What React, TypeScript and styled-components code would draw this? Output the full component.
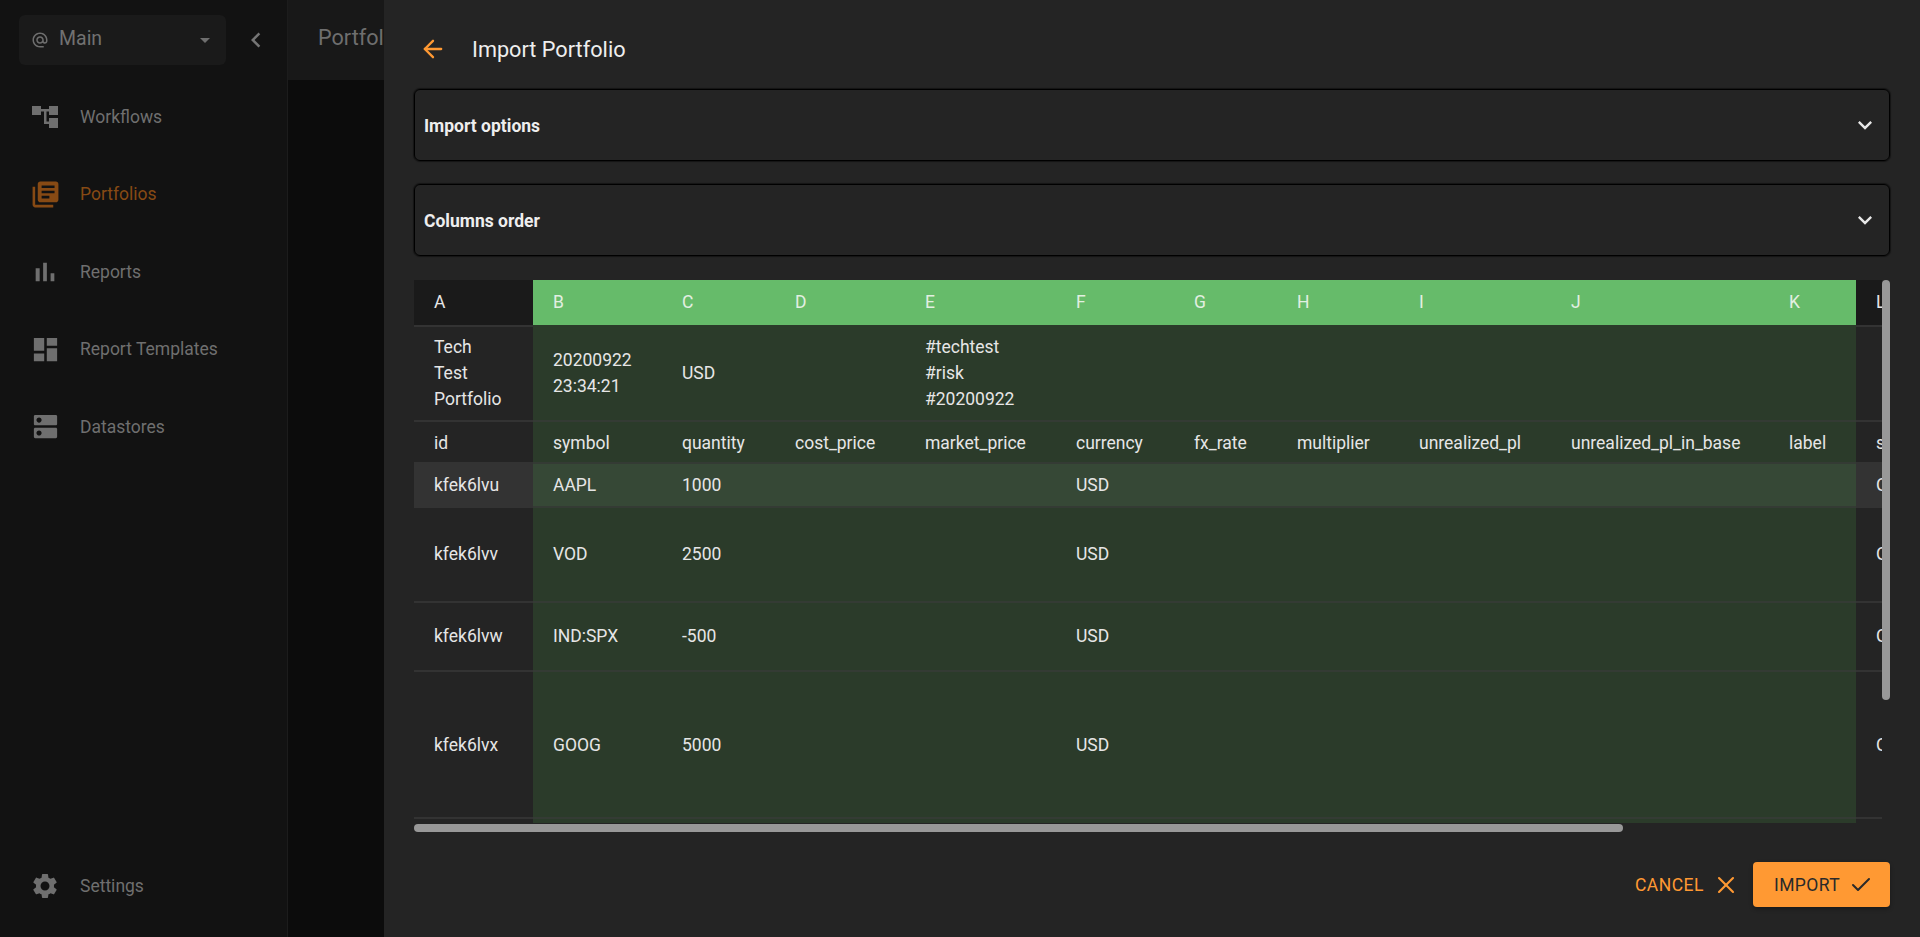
import React from 'react'
import styled, { createGlobalStyle } from 'styled-components'
import { MdDashboard, MdLibraryBooks, MdSettings, MdDns, MdExpandMore, MdChevronLeft, MdArrowDropDown, MdAlternateEmail } from 'react-icons/md'
import { ArrowLeft, Check, X } from 'lucide-react'

const GlobalStyle = createGlobalStyle`
    html, body {
        margin: 0;
        height: 100%;
        overflow: hidden;
        background: #0d0d0d;
        font-family: Roboto, "Liberation Sans", sans-serif;
    }
`

const WorkflowIcon = () => (
    <svg width="26" height="24" viewBox="0 0 26 24" fill="currentColor">
        <rect x="0" y="1" width="9" height="9" />
        <rect x="17" y="1" width="9" height="9" />
        <rect x="17" y="13" width="9" height="10" />
        <rect x="9" y="4" width="8" height="2.5" />
        <rect x="12" y="4" width="2.5" height="15" />
        <rect x="12" y="16.5" width="5" height="2.5" />
    </svg>
)

const BarsIcon = () => (
    <svg width="32" height="32" viewBox="0 0 24 24" fill="currentColor">
        <path d="M5 9.2h3V19H5zM10.6 5h2.8v14h-2.8zm5.6 8H19v6h-2.8z" />
    </svg>
)

const navItems = [
    { label: 'Workflows', icon: <WorkflowIcon /> },
    { label: 'Portfolios', icon: <MdLibraryBooks size={31} />, active: true },
    { label: 'Reports', icon: <BarsIcon /> },
    { label: 'Report Templates', icon: <MdDashboard size={31} /> },
    { label: 'Datastores', icon: <MdDns size={31} /> }
]

const columns = [
    { key: 'A', width: 119 },
    { key: 'B', width: 129, active: true },
    { key: 'C', width: 113, active: true },
    { key: 'D', width: 130, active: true },
    { key: 'E', width: 151, active: true },
    { key: 'F', width: 118, active: true },
    { key: 'G', width: 103, active: true },
    { key: 'H', width: 122, active: true },
    { key: 'I', width: 152, active: true },
    { key: 'J', width: 218, active: true },
    { key: 'K', width: 87, active: true },
    { key: 'L', width: 100 }
]

// height is the full row with its border, shift nudges the text up (+) or down (-)
const rows: { cells: React.ReactNode[]; height: number; shift?: number; hover?: boolean }[] = [
    {
        height: 95,
        shift: 2,
        cells: [
            <>Tech<br />Test<br />Portfolio</>,
            <>20200922<br />23:34:21</>,
            'USD',
            '',
            <>#techtest<br />#risk<br />#20200922</>,
            '', '', '', '', '', '', ''
        ]
    },
    {
        height: 42,
        shift: -2,
        cells: ['id', 'symbol', 'quantity', 'cost_price', 'market_price', 'currency', 'fx_rate', 'multiplier', 'unrealized_pl', 'unrealized_pl_in_base', 'label', 'strategy']
    },
    { height: 44, hover: true, cells: ['kfek6lvu', 'AAPL', '1000', '', '', 'USD', '', '', '', '', '', 'Open'] },
    { height: 95, shift: 2, cells: ['kfek6lvv', 'VOD', '2500', '', '', 'USD', '', '', '', '', '', 'Open'] },
    { height: 69, shift: 2, cells: ['kfek6lvw', 'IND:SPX', '-500', '', '', 'USD', '', '', '', '', '', 'Open'] },
    { height: 147, cells: ['kfek6lvx', 'GOOG', '5000', '', '', 'USD', '', '', '', '', '', 'Open'] }
]

export default function App() {
    return (
        <Page>
            <GlobalStyle />
            <Sidebar>
                <SidebarTop>
                    <WorkspaceSelect>
                        <MdAlternateEmail size={18} />
                        <WorkspaceName>Main</WorkspaceName>
                        <Caret><MdArrowDropDown size={24} /></Caret>
                    </WorkspaceSelect>
                    <Collapse><MdChevronLeft size={30} /></Collapse>
                </SidebarTop>
                <Nav>
                    {navItems.map(item => (
                        <NavItem key={item.label} $active={item.active}>
                            <NavIcon>{item.icon}</NavIcon>
                            {item.label}
                        </NavItem>
                    ))}
                </Nav>
                <NavItem>
                    <NavIcon><MdSettings size={30} /></NavIcon>
                    Settings
                </NavItem>
            </Sidebar>
            <Main>
                <TopBar>Portfolios</TopBar>
            </Main>
            <Drawer>
                <DrawerHeader>
                    <BackButton><ArrowLeft size={28} strokeWidth={2} /></BackButton>
                    <DrawerTitle>Import Portfolio</DrawerTitle>
                </DrawerHeader>
                <Accordion>
                    <AccordionTitle>Import options</AccordionTitle>
                    <MdExpandMore size={28} />
                </Accordion>
                <Accordion>
                    <AccordionTitle>Columns order</AccordionTitle>
                    <MdExpandMore size={28} />
                </Accordion>
                <TableWrap>
                    <SheetViewport>
                        <Sheet>
                            <colgroup>
                                {columns.map(c => <col key={c.key} style={{ width: c.width }} />)}
                            </colgroup>
                            <thead>
                                <tr>
                                    {columns.map(c => (
                                        <HeadCell key={c.key} $active={c.active}>{c.key}</HeadCell>
                                    ))}
                                </tr>
                            </thead>
                            <tbody>
                                {rows.map((row, r) => (
                                    <tr key={r} style={{ height: row.height }}>
                                        {row.cells.map((cell, i) => (
                                            <Cell key={i} $active={columns[i].active} $hover={row.hover} $shift={row.shift ?? 0}>{cell}</Cell>
                                        ))}
                                    </tr>
                                ))}
                                <tr>
                                    {columns.map(c => <EmptyCell key={c.key} $active={c.active} />)}
                                </tr>
                            </tbody>
                        </Sheet>
                    </SheetViewport>
                    <ScrollV />
                    <ScrollH />
                </TableWrap>
                <Footer>
                    <CancelButton>CANCEL <X size={28} strokeWidth={1.8} /></CancelButton>
                    <ImportButton>IMPORT <Check size={24} strokeWidth={2} /></ImportButton>
                </Footer>
            </Drawer>
        </Page>
    )
}

const Page = styled.div`
    position: relative;
    display: flex;
    width: 1920px;
    height: 937px;
    overflow: hidden;
`

const Sidebar = styled.aside`
    width: 287px;
    flex-shrink: 0;
    display: flex;
    flex-direction: column;
    background: #121212;
    border-right: 1px solid #1c1c1c;
    padding-bottom: 12px;
    box-sizing: content-box;
`

const SidebarTop = styled.div`
    display: flex;
    align-items: center;
    padding: 15px 0 0 19px;
    height: 50px;
`

const WorkspaceSelect = styled.div`
    width: 207px;
    height: 50px;
    box-sizing: border-box;
    display: flex;
    align-items: center;
    padding: 0 12px;
    border-radius: 6px;
    background: #1a1a1a;
    color: #6e6e6e;

    svg {
        flex-shrink: 0;
    }
`

const WorkspaceName = styled.span`
    margin-left: 10px;
    font-size: 19.5px;
    color: #717171;
    flex-grow: 1;
    margin-top: -3px;
`

const Caret = styled.span`
    display: flex;
    margin-right: -3px;
    color: #6e6e6e;
`

const Collapse = styled.span`
    display: flex;
    margin-left: 15px;
    color: #757575;
`

const Nav = styled.nav`
    flex-grow: 1;
    display: flex;
    flex-direction: column;
    padding-top: 13px;
`

const NavItem = styled.div<{ $active?: boolean }>`
    height: 77.5px;
    flex-shrink: 0;
    display: flex;
    align-items: center;
    padding-left: 32px;
    font-size: 17.5px;
    color: ${({ $active }) => ($active ? '#874a14' : '#6f6f6f')};
`

const NavIcon = styled.span`
    display: flex;
    align-items: center;
    justify-content: center;
    width: 26px;
    margin-right: 22px;

    svg {
        flex-shrink: 0;
    }
`

const Main = styled.main`
    flex-grow: 1;
    background: #0c0c0c;
`

const TopBar = styled.header`
    height: 80px;
    background: #181818;
    color: #6e6e6e;
    font-size: 21.6px;
    line-height: 76px;
    padding-left: 30px;
`

const Drawer = styled.section`
    position: absolute;
    top: 0;
    right: 0;
    bottom: 0;
    width: 1536px;
    box-sizing: border-box;
    display: flex;
    flex-direction: column;
    padding: 0 30px;
    background: #242424;
    color: #eeeeee;
`

const DrawerHeader = styled.div`
    display: flex;
    align-items: center;
    height: 89px;
    padding-top: 9px;
    box-sizing: border-box;
`

const BackButton = styled.span`
    display: flex;
    margin-left: 5px;
    color: #ff9933;
`

const DrawerTitle = styled.h1`
    margin: 0 0 0 25px;
    font-size: 21.7px;
    font-weight: 400;
`

const Accordion = styled.div`
    height: 72px;
    box-sizing: border-box;
    display: flex;
    align-items: center;
    justify-content: space-between;
    margin-bottom: 23px;
    padding: 0 10px 0 9px;
    border: 1px solid #000000;
    border-radius: 6px;
    box-shadow: 0 0 1px 1px rgba(0, 0, 0, 0.45);
    font-size: 17.5px;
    font-weight: 700;

    svg {
        color: #e8e8e8;
    }
`

const AccordionTitle = styled.span`
    padding-top: 2px;
`

const TableWrap = styled.div`
    position: relative;
    height: 552px;
    margin-top: 1px;
    overflow: hidden;
`

const SheetViewport = styled.div`
    width: 1468px;
    height: 543px;
    overflow: hidden;
`

const Sheet = styled.table`
    table-layout: fixed;
    width: 1522px;
    border-collapse: separate;
    border-spacing: 0;
    font-size: 17.5px;
    line-height: 26px;
    color: #e6e6e6;
`

const HeadCell = styled.th<{ $active?: boolean }>`
    height: 47px;
    box-sizing: border-box;
    padding: 0 0 2px 20px;
    text-align: left;
    font-weight: 400;
    color: ${({ $active }) => ($active ? '#e2efe2' : '#e6e6e6')};
    background: ${({ $active }) => ($active ? '#66bb6a' : '#1a1a1a')};
    border-bottom: 2px solid ${({ $active }) => ($active ? '#2b3b2a' : '#333333')};
`

const Cell = styled.td<{ $active?: boolean; $hover?: boolean; $shift: number }>`
    padding: ${({ $shift }) => ($shift < 0 ? -$shift : 0)}px 0 ${({ $shift }) => ($shift > 0 ? $shift : 0)}px 20px;
    box-sizing: border-box;
    white-space: nowrap;
    background: ${({ $active, $hover }) =>
        $active ? ($hover ? '#364836' : '#2b3b2a') : $hover ? '#333333' : '#242424'};
    border-bottom: 2px solid ${({ $active }) => ($active ? '#343b34' : '#333333')};
`

const EmptyCell = styled.td<{ $active?: boolean }>`
    height: 20px;
    padding: 0;
    background: ${({ $active }) => ($active ? '#2b3b2a' : '#242424')};
`

const ScrollV = styled.div`
    position: absolute;
    top: 0;
    right: 0;
    width: 8px;
    height: 420px;
    border-radius: 4px;
    background: #989898;
`

const ScrollH = styled.div`
    position: absolute;
    left: 0;
    top: 544px;
    width: 1209px;
    height: 8px;
    border-radius: 4px;
    background: #989898;
`

const Footer = styled.footer`
    display: flex;
    align-items: center;
    justify-content: flex-end;
    gap: 13px;
    margin-top: 30px;
`

const CancelButton = styled.span`
    display: flex;
    align-items: center;
    gap: 8px;
    font-size: 17.5px;
    letter-spacing: 0.5px;
    color: #ff9933;
`

const ImportButton = styled.span`
    width: 137px;
    height: 45px;
    box-sizing: border-box;
    display: flex;
    align-items: center;
    gap: 9px;
    padding-left: 21px;
    border-radius: 4px;
    font-size: 17.5px;
    letter-spacing: 0.4px;
    background: #ff9933;
    color: #2a2a2a;
    box-shadow: 0 2px 4px rgba(0, 0, 0, 0.3);
`
